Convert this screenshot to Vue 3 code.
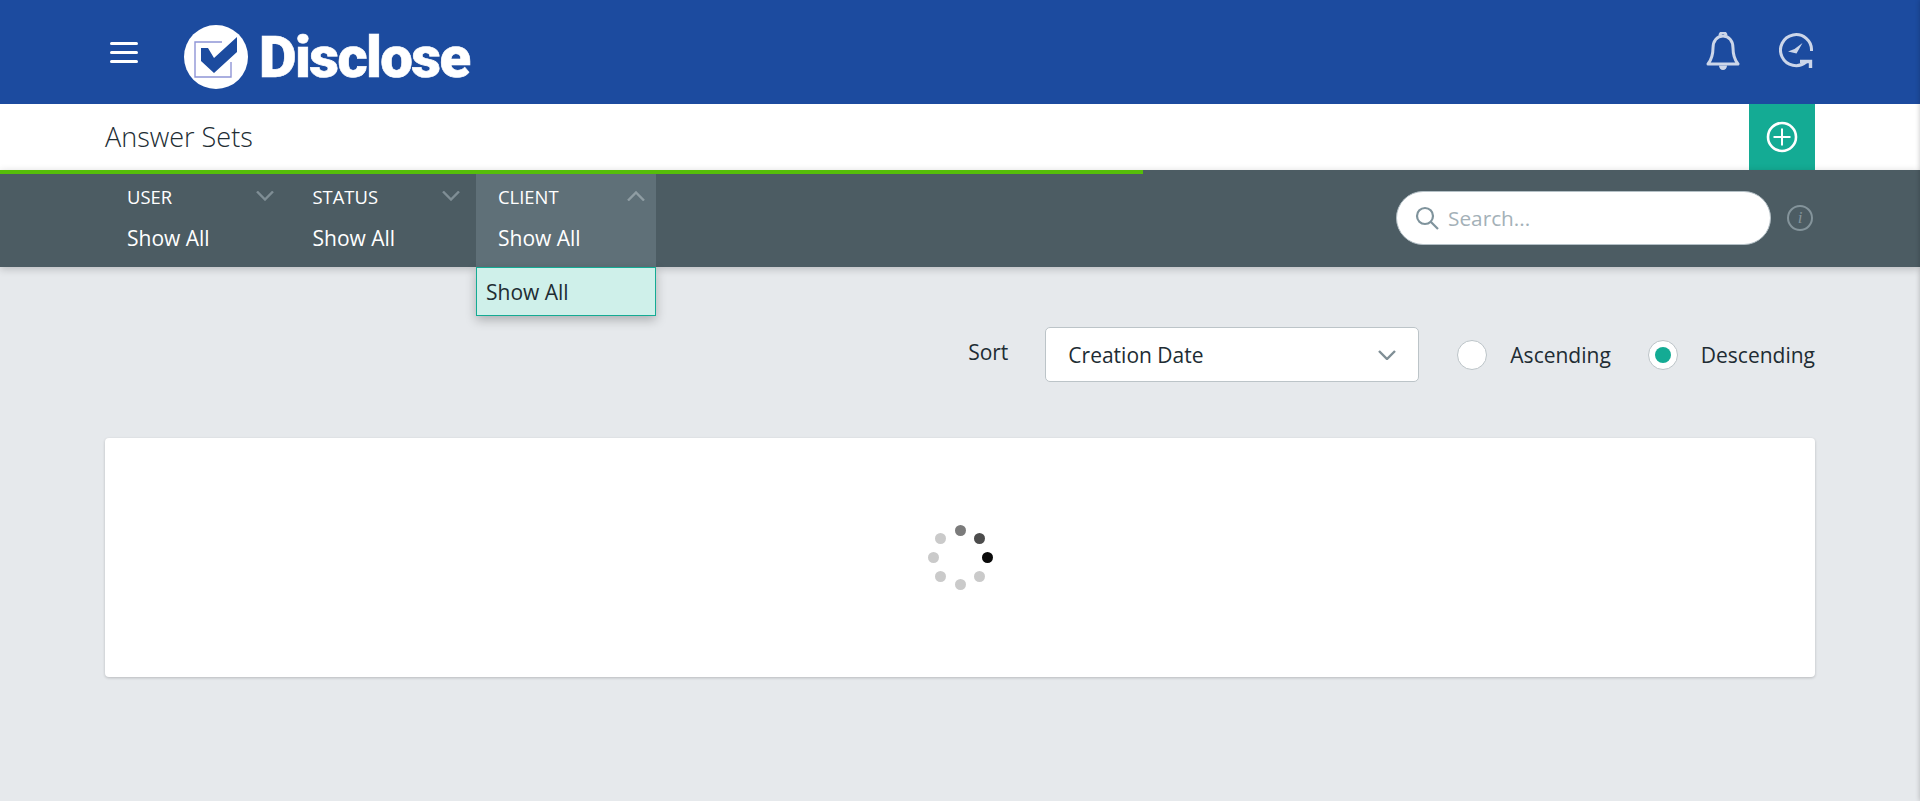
<template>
  <div class="page">
    <header class="topbar">
      <div class="topbar-left">
        <button class="burger" aria-label="Menu"><span></span><span></span><span></span></button>
        <div class="logo">
          <svg class="logo-mark" viewBox="0 0 64 64" width="64" height="64">
            <circle cx="32" cy="32" r="32" fill="#fff" />
            <path d="M38 17H11V52H47V37" fill="none" stroke="#8f95d6" stroke-width="1.4" />
            <path d="M17 23H24L30 33L53 12V27L30 48L17 36Z" fill="#1c4b9f" />
          </svg>
          <span class="logo-text">Disclose</span>
        </div>
      </div>
      <div class="topbar-right">
        <svg class="bell" viewBox="0 0 34 38" width="34" height="38" fill="none" stroke="#ccd6e9" stroke-width="3" stroke-linejoin="round">
          <path d="M2 32C6 27 7 23 7 16C7 9 11 4 17 4C23 4 27 9 27 16C27 23 28 27 32 32Z" />
          <path d="M14 3.500A3 3 0 0 1 20 3.500" />
          <path d="M13 33.500A4 4.500 0 0 0 21 33.500Z" fill="#ccd6e9" stroke="none" />
        </svg>
        <svg class="clock" viewBox="0 0 34 36" width="34" height="36" fill="none" stroke="#ccd6e9" stroke-width="3">
          <path d="M27 29A15.500 15.500 0 1 1 32.500 18" />
          <path d="M21 28.500H31.500V35" stroke-width="3.400" />
          <path d="M23.500 10L17.500 20.500L9 18.500L15.500 16Z" fill="#ccd6e9" stroke="none" />
        </svg>
      </div>
    </header>

    <div class="titlebar">
      <h1>Answer Sets</h1>
      <button class="add" aria-label="Add">
        <svg viewBox="0 0 32 32" width="32" height="32" fill="none" stroke="#fff">
          <circle cx="16" cy="16" r="14" stroke-width="2.600" />
          <path d="M16 7.500V24.500M7.500 16H24.500" stroke-width="2" />
        </svg>
      </button>
    </div>

    <section class="filterbar">
      <div class="progress"></div>
      <div class="filters">
        <div v-for="f in filters" :key="f.label" class="filter" :class="{ open: f.open }">
          <div class="filter-head">
            <span>{{ f.label }}</span>
            <svg viewBox="0 0 18 10" width="18" height="10" fill="none" :stroke="f.open ? '#8f9da3' : '#7f8e95'" stroke-width="2.400">
              <path :d="f.open ? 'M1 9.500L9 1.500L17 9.500' : 'M1 .5L9 8.500L17 .5'" />
            </svg>
          </div>
          <div class="filter-value">Show All</div>
          <div v-if="f.open" class="filter-menu">Show All</div>
        </div>
      </div>
      <div class="search-wrap">
        <div class="search">
          <svg viewBox="0 0 24 24" width="24" height="24" fill="none" stroke="#7f939c" stroke-width="2.200">
            <circle cx="10" cy="10" r="8" />
            <path d="M16 16L23 23" />
          </svg>
          <span>Search...</span>
        </div>
        <div class="info">i</div>
      </div>
    </section>

    <main class="content">
      <div class="sortrow">
        <span class="sort-label">Sort</span>
        <div class="select">
          <span>Creation Date</span>
          <svg viewBox="0 0 18 10" width="18" height="10" fill="none" stroke="#7f8e95" stroke-width="2.400">
            <path d="M1 1L9 9L17 1" />
          </svg>
        </div>
        <label class="radio"><i></i>Ascending</label>
        <label class="radio on"><i></i>Descending</label>
      </div>
      <div class="card">
        <div class="spinner">
          <span
            v-for="d in dots"
            :key="d.id"
            :style="{ left: d.x + 'px', top: d.y + 'px', background: d.color }"
          ></span>
        </div>
      </div>
    </main>
    <div class="edge"></div>
  </div>
</template>

<script setup>
const filters = [
  { label: 'USER', open: false },
  { label: 'STATUS', open: false },
  { label: 'CLIENT', open: true }
]

const dotColors = ['#0a0a0a', '#cacaca', '#cacaca', '#cacaca', '#cacaca', '#cacaca', '#7b7b7b', '#4c4c4c']
const dots = dotColors.map((color, i) => {
  const a = (i * Math.PI) / 4
  return { id: i, color, x: 27 + 27 * Math.cos(a) - 5.5, y: 27 + 27 * Math.sin(a) - 5.5 }
})
</script>

<style scoped>
.page {
  position: relative;
  min-height: 801px;
  background: #e6e9ec;
  font-family: "Open Sans", sans-serif;
  color: #212c33;
  overflow: hidden;
}

.edge {
  position: absolute;
  top: 0;
  bottom: 0;
  right: -4px;
  width: 4px;
  box-shadow: 0 0 5px rgba(0, 0, 0, 0.25);
}

.topbar {
  height: 104px;
  background: #1c4b9f;
  display: flex;
  justify-content: space-between;
  align-items: center;
  padding: 0 107px 0 110px;
  box-sizing: border-box;
}

.topbar-left {
  display: flex;
  align-items: center;
  gap: 46px;
}

.burger {
  width: 28px;
  display: flex;
  flex-direction: column;
  gap: 6px;
  padding: 0;
  border: 0;
  background: none;
}

.burger span {
  display: block;
  height: 3px;
  border-radius: 2px;
  background: #fff;
}

.logo {
  display: flex;
  align-items: center;
  gap: 11px;
  margin-top: 10px;
}

.logo-mark {
  flex: none;
}

.logo-text {
  font-family: Roboto, sans-serif;
  font-weight: 900;
  font-size: 58px;
  line-height: 64px;
  letter-spacing: -1.6px;
  color: #fff;
  -webkit-text-stroke: 0.6px #fff;
}

.topbar-right {
  display: flex;
  align-items: center;
  gap: 39px;
  margin-bottom: 2px;
}

.titlebar {
  height: 66px;
  background: #fff;
  display: flex;
  justify-content: space-between;
  padding: 0 105px;
}

.titlebar h1 {
  margin: 0;
  font-size: 27px;
  font-weight: 300;
  line-height: 66px;
  color: #212c33;
}

.add {
  width: 66px;
  height: 66px;
  padding: 0;
  border: 0;
  background: #14ab94;
  display: flex;
  align-items: center;
  justify-content: center;
}

.filterbar {
  position: relative;
  height: 97px;
  background: #4c5c63;
  display: flex;
  justify-content: space-between;
  padding: 4px 0 0 105px;
  box-sizing: border-box;
  box-shadow: 0 2px 8px rgba(0, 0, 0, 0.2);
}

.progress {
  position: absolute;
  top: 0;
  left: 0;
  width: 1143px;
  height: 4px;
  background: #56bd0a;
}

.filters {
  display: flex;
  gap: 5.500px;
}

.filter {
  position: relative;
  width: 180px;
  padding: 0 11px 0 22px;
  box-sizing: border-box;
  color: #fff;
}

.filter.open {
  background: #5f7078;
}

.filter-head {
  display: flex;
  justify-content: space-between;
  align-items: center;
  height: 16px;
  margin-top: 14px;
  font-size: 18.400px;
}

.filter-value {
  margin-top: 20px;
  font-size: 21px;
  line-height: 28px;
}

.filter-menu {
  position: absolute;
  top: 93px;
  left: 0;
  width: 180px;
  height: 49px;
  box-sizing: border-box;
  padding-left: 9px;
  border: 1px solid #14ab94;
  background: #cff0ea;
  color: #212c33;
  font-size: 21px;
  line-height: 49px;
  box-shadow: 0 4px 10px rgba(0, 0, 0, 0.25);
}

.search-wrap {
  display: flex;
  align-items: flex-start;
  padding: 17px 105px 0 0;
}

.search {
  width: 375px;
  height: 54px;
  box-sizing: border-box;
  border: 1px solid #b4c0c6;
  border-radius: 27px;
  background: #fff;
  display: flex;
  align-items: center;
  gap: 9px;
  padding-left: 18px;
  font-size: 20.800px;
  color: #a4b1b8;
}

.info {
  width: 26px;
  height: 26px;
  box-sizing: border-box;
  margin: 14px 2px 0 16px;
  border: 2px solid #84949b;
  border-radius: 50%;
  color: #84949b;
  font-family: "Liberation Serif", serif;
  font-style: italic;
  font-size: 17px;
  line-height: 22px;
  text-align: center;
}

.content {
  padding: 60px 105px 0;
}

.sortrow {
  display: flex;
  justify-content: flex-end;
  align-items: center;
  height: 55px;
  font-size: 21px;
}

.sort-label {
  margin: -6px 37px 0 0;
}

.select {
  width: 374px;
  height: 55px;
  box-sizing: border-box;
  display: flex;
  justify-content: space-between;
  align-items: center;
  padding: 0 22px;
  border: 1px solid #bcc4c8;
  border-radius: 5px;
  background: #fff;
  margin-right: 38px;
}

.radio {
  display: flex;
  align-items: center;
  gap: 23px;
}

.radio + .radio {
  margin-left: 37px;
}

.radio i {
  position: relative;
  width: 30px;
  height: 30px;
  box-sizing: border-box;
  border: 1px solid #bcc4c8;
  border-radius: 50%;
  background: #fff;
}

.radio.on i::after {
  content: '';
  position: absolute;
  top: 6px;
  left: 6px;
  width: 16px;
  height: 16px;
  border-radius: 50%;
  background: #14ab94;
}

.card {
  height: 239px;
  margin-top: 56px;
  background: #fff;
  border-radius: 4px;
  box-shadow: 0 1px 3px rgba(0, 0, 0, 0.2);
  display: flex;
  align-items: center;
  justify-content: center;
}

.spinner {
  position: relative;
  width: 54px;
  height: 54px;
}

.spinner span {
  position: absolute;
  width: 11px;
  height: 11px;
  border-radius: 50%;
}
</style>
